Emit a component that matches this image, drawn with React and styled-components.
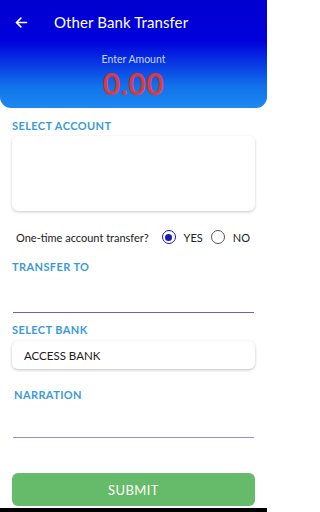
import React, { useState } from 'react';
import styled, { createGlobalStyle } from 'styled-components';

const GlobalStyle = createGlobalStyle`
    html, body {
        margin: 0;
        padding: 0;
        background: #ffffff;
    }
    body {
        font-family: Lato, "Open Sans", sans-serif;
    }
    * { box-sizing: border-box; }
`

function BackArrow() {
    return (
        <svg width="15" height="15" viewBox="0 0 24 24" fill="none" stroke="#ffffff" strokeWidth="2.5" strokeLinecap="round" strokeLinejoin="round">
            <path d="M20 12H4" />
            <path d="M11 5l-7 7 7 7" />
        </svg>
    )
}

function App() {
    const [oneTime, setOneTime] = useState(true)

    return (
        <Page>
            <GlobalStyle />
            <Header>
                <TopBar>
                    <BackButton><BackArrow /></BackButton>
                    <Title>Other Bank Transfer</Title>
                </TopBar>
                <AmountBlock>
                    <AmountLabel>Enter Amount</AmountLabel>
                    <Amount>0.00</Amount>
                </AmountBlock>
            </Header>

            <Form>
                <Label $top={12}>SELECT ACCOUNT</Label>
                <AccountCard />

                <RadioRow>
                    <Question>One-time account transfer?</Question>
                    <Option onClick={() => setOneTime(true)}>
                        <Radio $checked={oneTime} />
                        YES
                    </Option>
                    <Option onClick={() => setOneTime(false)}>
                        <Radio $checked={!oneTime} />
                        NO
                    </Option>
                </RadioRow>

                <Label $top={14}>TRANSFER TO</Label>
                <LineInput $color="#6b5fc7" $height={40} />

                <Label $top={11}>SELECT BANK</Label>
                <SelectBox>ACCESS BANK</SelectBox>

                <Label $top={20} $indent={2}>NARRATION</Label>
                <LineInput $color="#9a90d0" $height={37} />

                <SubmitButton>SUBMIT</SubmitButton>
            </Form>
            <NavStrip />
        </Page>
    )
}

const Page = styled.div`
    width: 267px;
    height: 512px;
    display: flex;
    flex-direction: column;
    background: #ffffff;
    overflow: hidden;
`
const Header = styled.div`
    height: 108px;
    background: linear-gradient(to bottom, #0000d0 0%, #0000dc 38%, #1172ea 80%, #1e88f0 100%);
    border-radius: 0 0 11px 11px;
    display: flex;
    flex-direction: column;
`
const TopBar = styled.div`
    height: 44px;
    display: flex;
    align-items: center;
    padding-left: 14px;
`
const BackButton = styled.div`
    width: 15px;
    height: 15px;
    display: flex;
`
const Title = styled.div`
    margin-left: 25px;
    color: #ffffff;
    font-size: 15px;
    letter-spacing: 0.1px;
`
const AmountBlock = styled.div`
    display: flex;
    flex-direction: column;
    align-items: center;
    padding-top: 9px;
`
const AmountLabel = styled.div`
    color: #c6d4ff;
    font-size: 10.5px;
    line-height: 12px;
`
const Amount = styled.div`
    color: #e2383a;
    font-size: 30px;
    font-weight: 700;
    line-height: 36px;
    letter-spacing: 0.5px;
`
const Form = styled.div`
    display: flex;
    flex-direction: column;
    padding: 0 12px;
    flex: 1;
`
const Label = styled.div`
    margin-top: ${p => p.$top}px;
    padding-left: ${p => p.$indent || 0}px;
    color: #3b9bd8;
    font-size: 11px;
    font-weight: 700;
    letter-spacing: 0.4px;
    line-height: 12px;
`
const AccountCard = styled.div`
    margin-top: 4px;
    height: 75px;
    border-radius: 6px;
    background: #ffffff;
    box-shadow: 0 1px 3px rgba(0, 0, 0, 0.22);
`
const RadioRow = styled.div`
    margin-top: 16px;
    padding-left: 4px;
    display: flex;
    align-items: center;
    height: 20px;
    font-size: 11px;
    color: #222222;
`
const Question = styled.div`
    flex: 1;
`
const Option = styled.label`
    display: flex;
    align-items: center;
    gap: 8px;
    margin-left: 8px;
    &:last-child { margin-right: 5px; }
    cursor: pointer;
`
const Radio = styled.span`
    width: 14px;
    height: 14px;
    border-radius: 50%;
    border: 1.5px solid ${p => p.$checked ? '#1a1ab4' : '#555555'};
    display: flex;
    align-items: center;
    justify-content: center;
    &::after {
        content: '';
        width: 7px;
        height: 7px;
        border-radius: 50%;
        background: ${p => p.$checked ? '#1a1ab4' : 'transparent'};
    }
`
const LineInput = styled.div`
    height: ${p => p.$height}px;
    margin: 0 1px;
    border-bottom: 1px solid ${p => p.$color};
`
const SelectBox = styled.div`
    margin-top: 5px;
    height: 28px;
    border-radius: 6px;
    background: #ffffff;
    box-shadow: 0 1px 3px rgba(0, 0, 0, 0.25);
    display: flex;
    align-items: center;
    padding-left: 12px;
    font-size: 11.5px;
    color: #1a1a1a;
`
const SubmitButton = styled.button`
    margin-top: 35px;
    height: 33px;
    border: none;
    border-radius: 6px;
    background: #66bb6a;
    color: #ffffff;
    font-family: Lato, "Open Sans", sans-serif;
    font-size: 13px;
    letter-spacing: 0.4px;
`
const NavStrip = styled.div`
    height: 4px;
    background: #000000;
`

export default App
